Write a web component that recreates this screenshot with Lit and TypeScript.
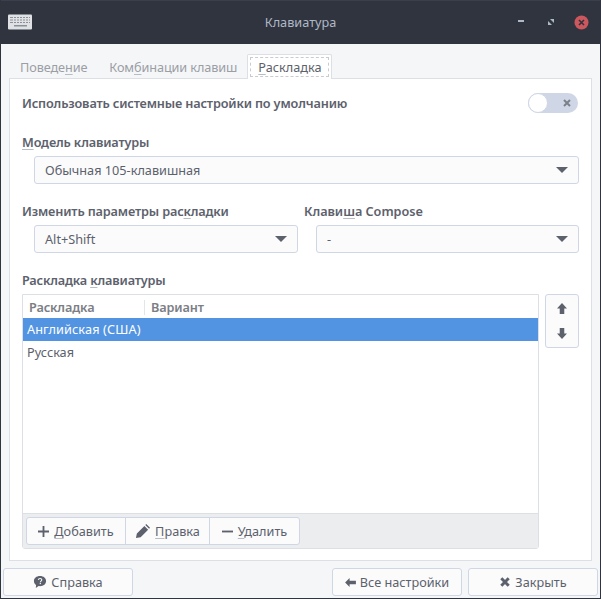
import { LitElement, html, css } from "lit";
import { customElement } from "lit/decorators.js";

const arrow = html`<span class="caret"></span>`;

@customElement("app-root")
export class AppRoot extends LitElement {
  static styles = css`
    :host { display: block; width: 601px; height: 599px; font-family: "Noto Sans", sans-serif; font-size: 12.7px; color: #5c616c; }
    * { box-sizing: border-box; }
    u { text-decoration-color: #b8bcc4; text-underline-offset: 2px; }
    .win { width: 601px; height: 599px; display: flex; flex-direction: column; background: #2f343f; padding: 0 1px 1px; }
    .title { height: 44px; flex: none; position: relative; color: #afb8c6; border-top: 1px solid #3a3f4b; }
    .title .name { text-align: center; line-height: 42px; }
    .kbd { position: absolute; left: 7px; top: 13px; }
    .wbtns { position: absolute; top: 0; left: 0; width: 100%; height: 100%; pointer-events: none; }
    .wb { position: absolute; }
    .body { flex: 1; background: #f5f6f7; display: flex; flex-direction: column; padding: 10px 8px 0; min-height: 0; }
    .tabs { height: 25px; flex: none; display: flex; position: relative; z-index: 1; }
    .tab { color: #9a9ea6; height: 25px; line-height: 18px; padding-top: 4px; letter-spacing: -0.1px; }
    .tab.first { padding-left: 11px; padding-right: 11px; }
    .tab.sec { padding-left: 11px; padding-right: 10px; }
    .tab.active { background: #fff; border: 1px solid #dcdfe3; border-bottom: none; border-radius: 2px 2px 0 0; color: #5c616c; padding: 2px 2px 0; width: 85px; letter-spacing: 0; }
    .focus { border: 1px dashed #c8cbd0; padding: 0 7px; height: 20px; line-height: 19px; display: block; }
    .nb { width: 583px; height: 483px; background: #fff; border: 1px solid #dcdfe3; margin-top: -1px; display: flex; flex-direction: column; padding: 0 12px; flex: none; }
    .b { font-weight: 600; color: #5c616c; letter-spacing: -0.15px; }
    .b.latin { letter-spacing: -0.03px; }
    .row1 { height: 48px; display: flex; align-items: center; justify-content: space-between; }
    .sw { width: 50px; height: 20px; border-radius: 10px; background: #cfd6e6; position: relative; display: block; flex: none; margin-right: 1px; }
    .knob { position: absolute; left: 0; top: 0; width: 20px; height: 20px; border-radius: 50%; background: #fff; border: 1px solid #cfd6e6; }
    .swx { position: absolute; right: 6px; top: 5px; }
    .lab { line-height: 18px; }
    .l1 { margin-top: 6px; }
    .combo { height: 28px; background: #fbfbfc; border: 1px solid #cfd6e6; border-radius: 3px; display: flex; align-items: center; justify-content: space-between; padding: 0 10px; margin: 5px 0 0 12px; }
    .caret { width: 0; height: 0; border-left: 6px solid transparent; border-right: 6px solid transparent; border-top: 6px solid #5c616c; }
    .two { display: grid; grid-template-columns: 276px 275px; column-gap: 6px; margin-top: 18px; }
    .l3 { margin-top: 18px; }
    .listrow { display: flex; margin-top: 5px; flex: none; }
    .list { width: 517px; height: 255px; border: 1px solid #dcdfe3; border-radius: 0 0 3px 3px; display: flex; flex-direction: column; background: #fff; flex: none; }
    .head { height: 23px; display: flex; align-items: center; font-weight: 600; color: #7b7e85; flex: none; padding: 1px 0 0 6px; letter-spacing: -0.1px; }
    .head span:first-child { width: 116px; border-right: 1px solid #e3e5e8; line-height: 15px; height: 15px; display: flex; align-items: center; }
    .head span:last-child { padding-left: 6px; }
    .item { height: 23px; line-height: 23px; padding-left: 4px; flex: none; }
    .item.sel { background: #5294e2; color: #fff; letter-spacing: 0.12px; }
    .spacer { flex: 1; }
    .tool { height: 35px; background: #ebedef; border-top: 1px solid #dcdfe3; padding: 3px 3px 0; flex: none; display: flex; }
    .tg { display: flex; height: 28px; border: 1px solid #cfd6e6; border-radius: 3px; background: #fbfbfc; }
    .tb { display: flex; align-items: center; justify-content: center; gap: 5px; border-right: 1px solid #cfd6e6; height: 100%; }
    .tb:last-child { border-right: none; }
    .side { width: 34px; height: 54px; margin-left: 6px; border: 1px solid #cfd6e6; border-radius: 3px; background: #fbfbfc; display: flex; flex-direction: column; align-items: center; justify-content: space-between; padding: 8px 0; }
    .foot { flex: 1; display: flex; padding: 7px 1px 0 1px; margin: 0 -7px; }
    .btn { height: 28px; border: 1px solid #cfd6e6; border-radius: 3px; background: #fbfbfc; display: flex; align-items: center; justify-content: center; gap: 4px; width: 130px; }
    .gap { margin-left: 6px; }
    .sp { flex: 1; }
    svg { display: block; flex: none; }
  `;

  render() {
    return html`<div class="win">
      <div class="title">
        <svg class="kbd" width="26" height="16" viewBox="0 0 26 16"><rect x="0" y="0.5" width="24" height="15" rx="1" fill="#dfe1e5"/><g fill="#8b8f97"><rect x="2" y="3" width="20" height="1"/><rect x="2" y="5.500" width="20" height="1"/><rect x="2" y="8" width="20" height="1"/><rect x="6" y="11" width="13" height="1.500"/></g><g fill="#dfe1e5"><rect x="5" y="2" width="1" height="8"/><rect x="8" y="2" width="1" height="8"/><rect x="11" y="2" width="1" height="8"/><rect x="14" y="2" width="1" height="8"/><rect x="17" y="2" width="1" height="8"/><rect x="20" y="2" width="1" height="8"/></g></svg>
        <div class="name">Клавиатура</div>
        <div class="wbtns">
          <svg class="wb" style="left:516px;top:19px" width="8" height="4"><rect x="1" y="0" width="6" height="2" fill="#afb8c6"/></svg>
          <svg class="wb" style="left:546px;top:17px" width="8" height="8" viewBox="0 0 8 8"><path d="M3 1h4v4zM1 3l4 4H1z" fill="#afb8c6"/></svg>
          <svg class="wb" style="left:573px;top:14px" width="15" height="15" viewBox="0 0 15 15"><circle cx="7.500" cy="7.500" r="7" fill="#cc575d"/><path d="M5 5l5 5M10 5l-5 5" stroke="#2f343f" stroke-width="1.600"/></svg>
        </div>
      </div>
      <div class="body">
        <div class="tabs">
          <div class="tab first">Поведе<u>н</u>ие</div>
          <div class="tab sec">Ком<u>б</u>инации клавиш</div>
          <div class="tab active"><span class="focus"><u>Р</u>аскладка</span></div>
        </div>
        <div class="nb">
          <div class="row1">
            <span class="b">Использовать системные настройки по умолчанию</span>
            <span class="sw"><span class="knob"></span>
              <svg class="swx" width="10" height="10" viewBox="0 0 10 10"><path d="M2 2l6 6M8 2l-6 6" stroke="#7b808b" stroke-width="2"/></svg>
            </span>
          </div>
          <div class="lab b l1"><u>М</u>одель клавиатуры</div>
          <div class="combo"><span>Обычная 105-клавишная</span>${arrow}</div>
          <div class="two">
            <div><div class="lab b">Изменить параметры рас<u>к</u>ладки</div>
              <div class="combo"><span>Alt+Shift</span>${arrow}</div></div>
            <div><div class="lab b latin">Клави<u>ш</u>а Compose</div>
              <div class="combo"><span>-</span>${arrow}</div></div>
          </div>
          <div class="lab b l3">Раскладка <u>к</u>лавиатуры</div>
          <div class="listrow">
            <div class="list">
              <div class="head"><span>Раскладка</span><span>Вариант</span></div>
              <div class="item sel">Английская (США)</div>
              <div class="item">Русская</div>
              <div class="spacer"></div>
              <div class="tool"><div class="tg">
                <div class="tb" style="width:99px"><svg width="11" height="11" viewBox="0 0 12 12"><path d="M5 0h2v5h5v2H7v5H5V7H0V5h5z" fill="#5c616c"/></svg><span><u>Д</u>обавить</span></div>
                <div class="tb" style="width:84px"><svg width="15" height="15" viewBox="0 0 16 16"><path d="M1 15l1-5 8-8 4 4-8 8z M11 1l1-1 4 4-1 1z" fill="#5c616c"/></svg><span><u>П</u>равка</span></div>
                <div class="tb" style="width:89px"><svg width="11" height="11" viewBox="0 0 12 12"><rect y="5" width="12" height="2" fill="#5c616c"/></svg><span><u>У</u>далить</span></div>
              </div></div>
            </div>
            <div class="side">
              <svg width="10" height="11" viewBox="0 0 11 12"><path d="M5.500 0L11 6H8v6H3V6H0z" fill="#5c616c"/></svg>
              <svg width="10" height="11" viewBox="0 0 11 12"><path d="M5.500 12L11 6H8V0H3v6H0z" fill="#5c616c"/></svg>
            </div>
          </div>
        </div>
        <div class="foot">
          <div class="btn"><svg width="14" height="14" viewBox="0 0 15 15"><path d="M7.500 1C11.400 1 14 3.400 14 6.500S11.400 12 7.500 12c-.7 0-1 0-1.500-.1L3 14l.3-3.200C1.800 9.800 1 8.300 1 6.500 1 3.400 3.600 1 7.500 1z" fill="#5c616c"/><path d="M5.700 5.200c.2-1 1-1.500 1.900-1.500 1 0 1.800.6 1.800 1.500 0 1.300-1.500 1.300-1.500 2.500" stroke="#fbfbfc" stroke-width="1.200" fill="none"/><rect x="7.200" y="8.500" width="1.300" height="1.300" fill="#fbfbfc"/></svg><span>Справка</span></div>
          <div class="sp"></div>
          <div class="btn"><svg width="11" height="9" viewBox="0 0 12 10"><path d="M0 5l5-5v3h7v4H5v3z" fill="#5c616c"/></svg><span>Все настройки</span></div>
          <div class="btn gap"><svg width="12" height="12" viewBox="0 0 13 13"><path d="M2.500 2.500l8 8M10.500 2.500l-8 8" stroke="#5c616c" stroke-width="3.200"/></svg><span>Закрыть</span></div>
        </div>
      </div>
    </div>`;
  }
}
